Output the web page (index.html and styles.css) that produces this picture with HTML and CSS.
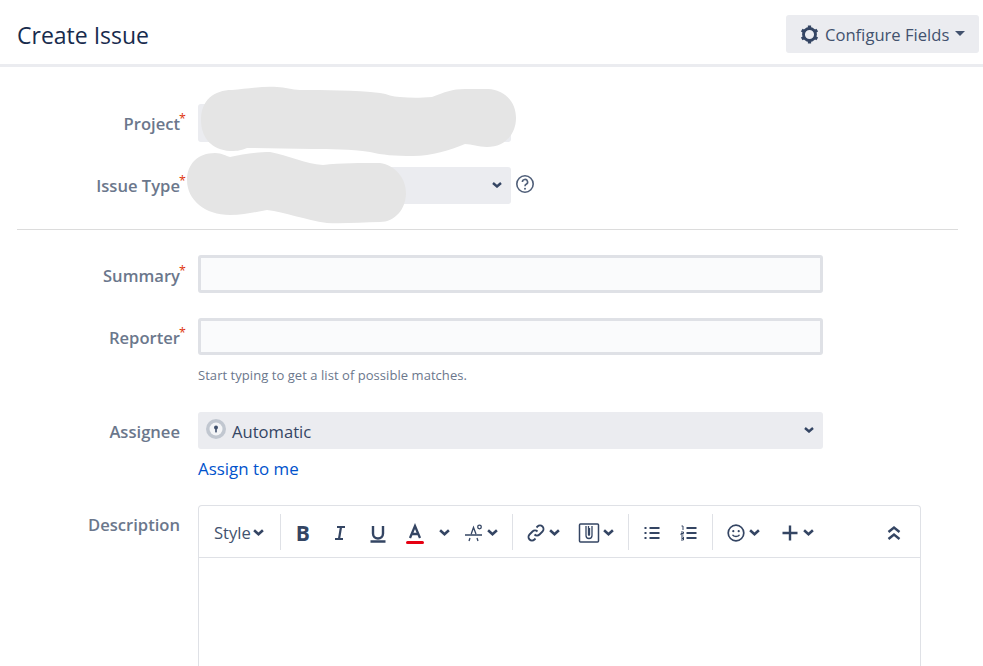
FILE: index.html
```html
<!DOCTYPE html>
<html lang="en">
<head>
<meta charset="utf-8">
<title>Create Issue</title>
<link rel="stylesheet" href="styles.css">
</head>
<body>
<header class="head">
  <h1 class="title">Create Issue</h1>
  <button class="config">
    <svg class="gear" viewBox="0 0 20 20"><path fill="none" stroke="#344563" stroke-width="3" stroke-linejoin="round" d="M10 3.700a6.300 6.300 0 1 0 0 12.600a6.300 6.300 0 1 0 0-12.600z"/><path fill="none" stroke="#344563" stroke-width="3.400" d="M10 0.500v3M10 16.500v3M1.800 5.300l2.600 1.500M15.600 13.200l2.600 1.500M1.800 14.700l2.600-1.500M15.600 6.800l2.600-1.500"/></svg>
    <span>Configure Fields</span>
    <i class="caret"></i>
  </button>
</header>
<main class="form">
  <div class="row row-project">
    <label class="lab lab-top">Project<b>*</b></label>
    <div class="select sel-short"></div>
  </div>
  <div class="row row-type">
    <label class="lab lab-top">Issue Type<b>*</b></label>
    <div class="select sel-short sel-type"><svg class="chev-select" viewBox="0 0 10 6"><path d="M1 1l4 3.500L9 1" fill="none" stroke="#344563" stroke-width="2.400"/></svg></div>
    <svg class="help" viewBox="0 0 20 20"><circle cx="10" cy="10" r="8.200" fill="none" stroke="#505f79" stroke-width="1.600"/><path d="M7.400 8a2.600 2.600 0 1 1 3.800 2.300c-.8.400-1.200.9-1.200 1.900" fill="none" stroke="#505f79" stroke-width="1.600"/><circle cx="10" cy="14.700" r="1" fill="#505f79"/></svg>
  </div>
  <hr class="rule">
  <div class="row row-input">
    <label class="lab">Summary<b>*</b></label>
    <input class="input" type="text">
  </div>
  <div class="row row-input row-reporter">
    <label class="lab">Reporter<b>*</b></label>
    <input class="input" type="text">
  </div>
  <p class="hint">Start typing to get a list of possible matches.</p>
  <div class="row row-assignee">
    <label class="lab">Assignee</label>
    <div class="select sel-wide">
      <svg class="avatar" viewBox="0 0 20 20"><circle cx="10" cy="10" r="10" fill="#c1c7d0"/><circle cx="10" cy="10" r="6.500" fill="#f4f5f7"/><circle cx="10" cy="8.600" r="2" fill="#42526e"/><rect x="9.200" y="9" width="1.600" height="4.400" fill="#42526e"/></svg>
      <span class="sel-text">Automatic</span>
      <svg class="chev-select" viewBox="0 0 10 6"><path d="M1 1l4 3.500L9 1" fill="none" stroke="#344563" stroke-width="2.400"/></svg>
    </div>
  </div>
  <a class="assign" href="#">Assign to me</a>
  <div class="row row-desc">
    <label class="lab lab-desc">Description</label>
    <div class="editor">
      <div class="toolbar">
        <div class="grp grp-style">
          <span class="style">Style</span>
          <svg class="chev" viewBox="0 0 10 6"><path d="M1 1l4 3.500L9 1"/></svg>
        </div>
        <div class="grp grp-text">
          <span class="btn"><span class="fmt fmt-b">B</span></span>
          <span class="btn"><svg class="ico" viewBox="0 0 24 24"><path class="st" d="M9 6h8M7 18h8M13 6l-2 12"/></svg></span>
          <span class="btn"><svg class="ico" viewBox="0 0 24 24"><path class="st st-u" d="M7 5v7.500a5 5 0 0 0 10 0V5M4.500 20.500h15"/></svg></span>
          <span class="btn"><svg class="ico" viewBox="0 0 24 24"><path class="st st-thin" d="M7 17l5-12 5 12M8.600 13h6.800"/><rect x="3" y="20" width="18" height="3" rx="1.500" fill="#e60012"/></svg></span>
          <svg class="chev chev-color" viewBox="0 0 10 6"><path d="M1 1l4 3.500L9 1"/></svg>
          <svg class="ico ico-clear" viewBox="0 0 24 24"><path class="st st-line" d="M3 14h17M7 20l1-3M16 20l-1-3M9.200 13l2.300-6.500L14 13"/><circle cx="17.500" cy="6" r="1.800" fill="none" stroke="#344563" stroke-width="1.300"/></svg>
          <svg class="chev chev-after" viewBox="0 0 10 6"><path d="M1 1l4 3.500L9 1"/></svg>
        </div>
        <div class="grp grp-insert">
          <svg class="ico ico-link" viewBox="0 0 24 24"><path class="st st-link" d="M10.500 13.500a3.500 3.500 0 0 0 5 0l3-3a3.500 3.500 0 0 0-5-5l-1 1M13.500 10.500a3.500 3.500 0 0 0-5 0l-3 3a3.500 3.500 0 0 0 5 5l1-1"/></svg>
          <svg class="chev chev-after" viewBox="0 0 10 6"><path d="M1 1l4 3.500L9 1"/></svg>
          <svg class="ico ico-clip" viewBox="0 0 24 24"><rect x="2.500" y="3" width="19" height="18" rx="1" fill="none" stroke="#344563" stroke-width="1.500"/><path d="M9 5v9.500a3 3 0 0 0 6 0V5M11.500 5v9a.7.7 0 0 0 1 0V7" fill="none" stroke="#344563" stroke-width="1.300"/></svg>
          <svg class="chev chev-clip" viewBox="0 0 10 6"><path d="M1 1l4 3.500L9 1"/></svg>
        </div>
        <div class="grp grp-list">
          <svg class="ico" viewBox="0 0 24 24"><path class="st st-list" d="M9.500 7h10M9.500 12h10M9.500 17h10"/><path class="dots" d="M4.500 6h2v2h-2zM4.500 11h2v2h-2zM4.500 16h2v2h-2z"/></svg>
          <svg class="ico ico-num" viewBox="0 0 24 24"><path class="st st-list" d="M9.500 7h10M9.500 12h10M9.500 17h10"/><path class="num" d="M4.500 5h1.500v4M4 11h2.500v1.500H4V14h2.500M4 16h2.500v3H4M4.500 17.500h2"/></svg>
        </div>
        <div class="grp grp-misc">
          <svg class="ico" viewBox="0 0 24 24"><circle cx="12" cy="12" r="7.800" fill="none" stroke="#344563" stroke-width="1.700"/><circle cx="9.300" cy="10.200" r="1.100" fill="#344563"/><circle cx="14.700" cy="10.200" r="1.100" fill="#344563"/><path d="M8.500 13.800c1 2.200 6 2.200 7 0" fill="none" stroke="#344563" stroke-width="1.500"/></svg>
          <svg class="chev chev-after" viewBox="0 0 10 6"><path d="M1 1l4 3.500L9 1"/></svg>
          <svg class="ico ico-plus" viewBox="0 0 24 24"><path class="st st-plus" d="M12 4.500v15M4.500 12h15"/></svg>
          <svg class="chev chev-after" viewBox="0 0 10 6"><path d="M1 1l4 3.500L9 1"/></svg>
        </div>
        <svg class="ico ico-collapse" viewBox="0 0 24 24"><path class="st st-plus" d="M6.500 11l5.500-4.500 5.500 4.500M6.500 18l5.500-4.500 5.500 4.500"/></svg>
      </div>
    </div>
  </div>
</main>
<svg class="redact" viewBox="0 0 983 666" aria-hidden="true">
  <path d="M201 120C201 100 214 90 232 90C245 89 262 86 277 87C285 87 292 90 300 90C325 90 355 90 380 93C388 94 392 97 400 97C410 98 420 98 432 97C445 92 452 89 465 89L488 89C505 90 516 102 516 118C516 134 505 147 487 147C478 147 472 144 465 144C450 150 432 156 413 156C395 156 382 155 370 152C350 149 330 149 313 149C290 149 268 148 247 148C240 151 235 151 230 151C212 150 201 138 201 120Z"/>
  <path d="M187 180C187 164 198 153 215 153C222 153 226 156 230 157C242 154 258 152 270 152C288 155 305 164 323 165C340 163 362 163 380 163C395 165 406 178 406 193C406 209 395 222 380 222C362 222 345 224 327 223C305 220 285 212 267 210C255 212 245 215 230 215C205 215 187 200 187 180Z"/>
</svg>
</body>
</html>
```

FILE: styles.css
```css
* { box-sizing: border-box; }
html, body { margin: 0; padding: 0; }
body {
  position: relative;
  width: 983px;
  height: 666px;
  overflow: hidden;
  background: #fff;
  font-family: "Open Sans", "Noto Sans", sans-serif;
  font-size: 16.6px;
  color: #172b4d;
}
.head {
  display: flex;
  align-items: flex-start;
  justify-content: space-between;
  height: 67px;
  padding: 15px 4px 0 17px;
  border-bottom: 3px solid #ebecf0;
}
.title {
  margin: 3px 0 0;
  font-size: 23px;
  line-height: 34px;
  font-weight: 400;
  color: #172b4d;
}
.config {
  display: flex;
  align-items: center;
  width: 193px;
  height: 38px;
  padding: 0 0 0 14px;
  border: 0;
  border-radius: 3px;
  background: #ebecf0;
  font: inherit;
  color: #42526e;
}
.gear { width: 19px; height: 19px; margin-right: 6px; }
.caret {
  margin-left: 6px;
  margin-bottom: 1px;
  border-left: 5px solid transparent;
  border-right: 5px solid transparent;
  border-top: 5px solid #42526e;
}
.form { height: 599px; padding: 37px 25px 0 0; }
.row { display: flex; align-items: center; }
.lab {
  position: relative;
  top: 1px;
  flex: 0 0 198px;
  padding-right: 18px;
  text-align: right;
  font-size: 16.6px;
  font-weight: 600;
  color: #6b778c;
}
.lab-top { top: 0; }
.lab b {
  position: absolute;
  top: -2px;
  right: 19px;
  width: 0;
  font-weight: 400;
  font-size: 12.5px;
  color: #de350b;
}
.select {
  position: relative;
  display: flex;
  align-items: center;
  height: 38px;
  border-radius: 3px;
  background: #ebecf0;
}
.sel-short { width: 313px; }
.sel-type { height: 37px; }
.sel-wide { width: 625px; height: 37px; padding-left: 8px; color: #344563; }
.sel-text { padding-top: 1px; }
.row-type { margin-top: 25px; }
.chev-select {
  position: absolute;
  right: 9px;
  top: 50%;
  width: 10px;
  height: 6px;
  margin-top: -4px;
}
.help { width: 20px; height: 20px; margin: -3px 0 0 4px; }
.rule {
  height: 1px;
  margin: 25px 0 25px 17px;
  border: 0;
  background: #dcdcdc;
}
.input {
  width: 625px;
  height: 38px;
  border: 3px solid #dfe1e6;
  border-radius: 3px;
  background: #fafbfc;
}
.row-reporter { margin-top: 25px; }
.row-reporter .input { height: 37px; }
.hint {
  margin: 12px 0 0 198px;
  font-size: 13px;
  letter-spacing: 0.05px;
  line-height: 16px;
  color: #6b778c;
}
.row-assignee { margin-top: 29px; }
.avatar { width: 20px; height: 20px; margin: -4px 6px 0 0; }
.assign {
  display: block;
  margin: 9px 0 0 198px;
  font-size: 16.9px;
  line-height: 22px;
  color: #0052cc;
  text-decoration: none;
}
.row-desc { align-items: flex-start; margin-top: 25px; }
.lab-desc { top: 8px; }
.editor {
  width: 723px;
  height: 161px;
  border: 1px solid #dfe1e6;
  border-bottom: 0;
  border-radius: 4px 4px 0 0;
}
.toolbar {
  display: flex;
  align-items: center;
  height: 52px;
  padding: 8px 0;
  border-bottom: 1px solid #dfe1e6;
}
.grp {
  display: flex;
  align-items: center;
  height: 36px;
  padding-top: 2px;
  border-right: 1px solid #dfe1e6;
}
.grp-style { width: 82px; padding-left: 15px; }
.style { width: 39px; color: #42526e; }
.chev { width: 11px; height: 7px; flex: none; }
.chev path { fill: none; stroke: #344563; stroke-width: 2.400; }
.grp-text { width: 232px; padding-left: 3px; }
.btn { display: flex; justify-content: center; align-items: center; width: 37.5px; }
.fmt { font-weight: 700; font-size: 21px; line-height: 24px; color: #344563; }
.ico { width: 24px; height: 24px; flex: none; }
.st { fill: none; stroke: #344563; stroke-width: 2.200; }
.st-thin { stroke-width: 2.300; }
.st-u { stroke-width: 2.400; }
.st-line { stroke-width: 1.300; }
.st-link { stroke-width: 1.800; }
.st-list { stroke-width: 2; }
.st-plus { stroke-width: 2.400; }
.dots { fill: #344563; }
.num { fill: none; stroke: #344563; stroke-width: 1; }
.chev-color { margin-left: 5px; }
.ico-clear { margin-left: 12px; }
.chev-after { margin-left: 1px; }
.grp-insert { width: 116px; padding-left: 11px; }
.ico-clip { margin-left: 17px; }
.chev-clip { margin-left: 2px; }
.grp-list { width: 84px; padding-left: 11px; }
.ico-num { margin-left: 13px; }
.grp-misc { border-right: 0; padding-left: 11px; }
.ico-plus { margin-left: 18px; }
.ico-collapse { margin: 2px 14px 0 auto; }
.redact {
  position: absolute;
  left: 0;
  top: 0;
  width: 983px;
  height: 666px;
  fill: #e5e5e5;
  pointer-events: none;
}
```
